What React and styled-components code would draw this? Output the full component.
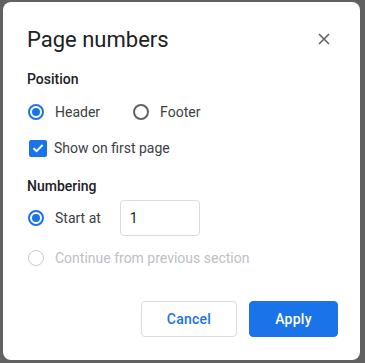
import React, { useState } from "react";
import styled, { createGlobalStyle } from "styled-components";

const Global = createGlobalStyle`
  html, body { margin: 0; padding: 0; }
  body { font-family: Roboto, "Liberation Sans", Arial, sans-serif; }
  * { box-sizing: border-box; }
`;

const Backdrop = styled.div`
  width: 365px;
  height: 363px;
  background: #616161;
  padding: 2px 5px 3px 3px;
`;

const Dialog = styled.div`
  background: #ffffff;
  border-radius: 8px;
  height: 100%;
  padding: 24px 22px 23px 24px;
  display: flex;
  flex-direction: column;
`;

const Header = styled.div`
  display: flex;
  align-items: center;
  justify-content: space-between;
  height: 28px;
`;

const Title = styled.h1`
  margin: 0;
  font-family: Roboto, "Liberation Sans", sans-serif;
  font-size: 22px;
  font-weight: 400;
  line-height: 28px;
  color: #202124;
`;

const CloseButton = styled.button`
  width: 28px;
  height: 28px;
  border: 0;
  background: transparent;
  padding: 0;
  display: flex;
  align-items: center;
  justify-content: center;
  cursor: pointer;
  margin-top: -2px;
`;

const SectionLabel = styled.div`
  font-size: 14px;
  font-weight: 500;
  line-height: 20px;
  color: #202124;
  margin-top: ${(p) => p.$mt}px;
`;

const Row = styled.div`
  display: flex;
  align-items: center;
  height: ${(p) => p.$h || 40}px;
  margin-top: ${(p) => p.$mt || 0}px;
`;

const Option = styled.label`
  display: flex;
  align-items: center;
  font-size: 14px;
  line-height: 20px;
  color: ${(p) => (p.$disabled ? "#bdc1c6" : "#3c4043")};
  margin-right: ${(p) => p.$mr || 0}px;
  cursor: ${(p) => (p.$disabled ? "default" : "pointer")};
`;

const RadioCircle = styled.span`
  width: 16px;
  height: 16px;
  border-radius: 50%;
  margin-left: 1px;
  margin-right: 11px;
  border: ${(p) =>
    p.$disabled ? "1px solid #c8cacd" : p.$checked ? "2px solid #1a73e8" : "2px solid #5f6368"};
  display: flex;
  align-items: center;
  justify-content: center;
  flex-shrink: 0;
  &::after {
    content: "";
    width: 8px;
    height: 8px;
    border-radius: 50%;
    background: #1a73e8;
    display: ${(p) => (p.$checked ? "block" : "none")};
  }
`;

const CheckBox = styled.span`
  width: 18px;
  height: 17px;
  border-radius: 2px;
  background: #1a73e8;
  margin-left: 2px;
  margin-right: 7px;
  display: flex;
  align-items: center;
  justify-content: center;
  flex-shrink: 0;
`;

const NumberInput = styled.input`
  width: 80px;
  height: 36px;
  margin-left: 19px;
  border: 1px solid #dadce0;
  border-radius: 4px;
  padding: 0 9px;
  font-family: Roboto, "Liberation Sans", sans-serif;
  font-size: 14px;
  color: #202124;
  outline: none;
`;

const Actions = styled.div`
  margin-top: auto;
  display: flex;
  justify-content: flex-end;
  gap: 12px;
`;

const Button = styled.button`
  height: 36px;
  padding: 0 24px;
  border-radius: 4px;
  font-family: Roboto, "Liberation Sans", sans-serif;
  font-size: 14px;
  font-weight: 500;
  letter-spacing: 0.25px;
  cursor: pointer;
  border: 1px solid ${(p) => (p.$primary ? "#1a73e8" : "#dadce0")};
  background: ${(p) => (p.$primary ? "#1a73e8" : "#ffffff")};
  color: ${(p) => (p.$primary ? "#ffffff" : "#1a73e8")};
  min-width: ${(p) => p.$w}px;
`;

function Radio({ checked, disabled, children, mr, onClick }) {
  return (
    <Option $disabled={disabled} $mr={mr} onClick={onClick}>
      <RadioCircle $checked={checked} $disabled={disabled} />
      {children}
    </Option>
  );
}

export default function App() {
  const [pos, setPos] = useState("header");
  return (
    <Backdrop>
      <Global />
      <Dialog>
        <Header>
          <Title>Page numbers</Title>
          <CloseButton aria-label="Close">
            <svg width="12" height="12" viewBox="0 0 12 12">
              <path d="M1 1L11 11M11 1L1 11" stroke="#5f6368" strokeWidth="1.6" />
            </svg>
          </CloseButton>
        </Header>
        <SectionLabel $mt={15}>Position</SectionLabel>
        <Row $mt={3}>
          <Radio checked={pos === "header"} mr={32} onClick={() => setPos("header")}>
            Header
          </Radio>
          <Radio checked={pos === "footer"} onClick={() => setPos("footer")}>
            Footer
          </Radio>
        </Row>
        <Row $h={32}>
          <Option>
            <CheckBox>
              <svg width="14" height="14" viewBox="0 0 14 14">
                <path d="M2.5 7.2L5.6 10.2L11.6 4" stroke="#fff" strokeWidth="2" fill="none" />
              </svg>
            </CheckBox>
            Show on first page
          </Option>
        </Row>
        <SectionLabel $mt={12}>Numbering</SectionLabel>
        <Row $mt={2}>
          <Radio checked>Start at</Radio>
          <NumberInput defaultValue="1" />
        </Row>
        <Row>
          <Radio disabled>Continue from previous section</Radio>
        </Row>
        <Actions>
          <Button $w={96}>Cancel</Button>
          <Button $primary $w={89}>Apply</Button>
        </Actions>
      </Dialog>
    </Backdrop>
  );
}
